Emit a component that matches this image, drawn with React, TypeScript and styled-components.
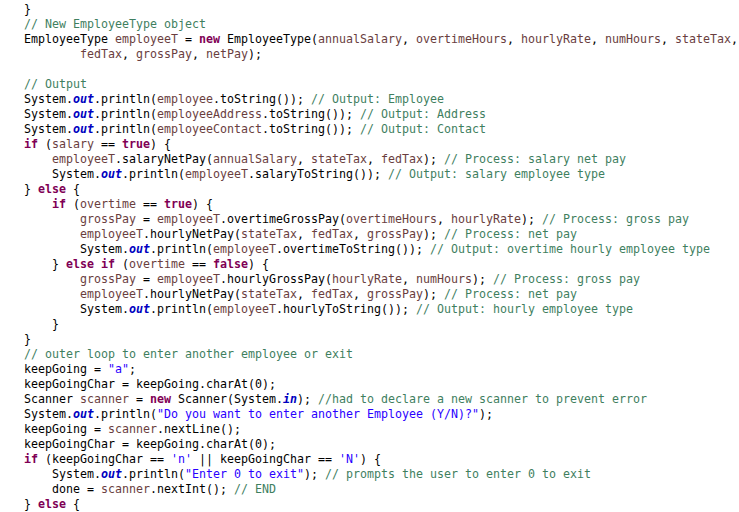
import React from "react";
import styled, { createGlobalStyle } from "styled-components";

const GlobalStyle = createGlobalStyle`
  html, body {
    margin: 0;
    padding: 0;
    background: #ffffff;
  }
`;

type Kind = "plain" | "keyword" | "comment" | "string" | "local" | "field";

const KEYWORDS = new Set(["new", "if", "else", "true", "false"]);
const LOCALS = new Set([
  "employeeT",
  "annualSalary",
  "overtimeHours",
  "hourlyRate",
  "numHours",
  "stateTax",
  "fedTax",
  "grossPay",
  "netPay",
  "employee",
  "employeeAddress",
  "employeeContact",
  "salary",
  "overtime",
  "scanner",
]);
const STATIC_FIELDS = new Set(["out", "in"]);

const SOURCE: string[] = [
  "}",
  "// New EmployeeType object",
  "EmployeeType employeeT = new EmployeeType(annualSalary, overtimeHours, hourlyRate, numHours, stateTax,",
  "        fedTax, grossPay, netPay);",
  "",
  "// Output",
  "System.out.println(employee.toString()); // Output: Employee",
  "System.out.println(employeeAddress.toString()); // Output: Address",
  "System.out.println(employeeContact.toString()); // Output: Contact",
  "if (salary == true) {",
  "    employeeT.salaryNetPay(annualSalary, stateTax, fedTax); // Process: salary net pay",
  "    System.out.println(employeeT.salaryToString()); // Output: salary employee type",
  "} else {",
  "    if (overtime == true) {",
  "        grossPay = employeeT.overtimeGrossPay(overtimeHours, hourlyRate); // Process: gross pay",
  "        employeeT.hourlyNetPay(stateTax, fedTax, grossPay); // Process: net pay",
  "        System.out.println(employeeT.overtimeToString()); // Output: overtime hourly employee type",
  "    } else if (overtime == false) {",
  "        grossPay = employeeT.hourlyGrossPay(hourlyRate, numHours); // Process: gross pay",
  "        employeeT.hourlyNetPay(stateTax, fedTax, grossPay); // Process: net pay",
  "        System.out.println(employeeT.hourlyToString()); // Output: hourly employee type",
  "    }",
  "}",
  "// outer loop to enter another employee or exit",
  'keepGoing = "a";',
  "keepGoingChar = keepGoing.charAt(0);",
  "Scanner scanner = new Scanner(System.in); //had to declare a new scanner to prevent error",
  'System.out.println("Do you want to enter another Employee (Y/N)?");',
  "keepGoing = scanner.nextLine();",
  "keepGoingChar = keepGoing.charAt(0);",
  "if (keepGoingChar == 'n' || keepGoingChar == 'N') {",
  '    System.out.println("Enter 0 to exit"); // prompts the user to enter 0 to exit',
  "    done = scanner.nextInt(); // END",
  "} else {",
];

type Tok = { text: string; kind: Kind };

function tokenize(line: string): Tok[] {
  const out: Tok[] = [];
  let i = 0;
  let prevIdent = "";
  const push = (text: string, kind: Kind) => {
    const last = out[out.length - 1];
    if (last && last.kind === kind) last.text += text;
    else out.push({ text, kind });
  };
  while (i < line.length) {
    const rest = line.slice(i);
    if (rest.startsWith("//")) {
      push(rest, "comment");
      break;
    }
    const ch = line[i];
    if (ch === '"' || ch === "'") {
      const end = line.indexOf(ch, i + 1);
      const s = line.slice(i, end + 1);
      push(s, "string");
      i = end + 1;
      continue;
    }
    const m = /^[A-Za-z_][A-Za-z0-9_]*/.exec(rest);
    if (m) {
      const w = m[0];
      let kind: Kind = "plain";
      if (KEYWORDS.has(w)) kind = "keyword";
      else if (STATIC_FIELDS.has(w) && prevIdent === "System.") kind = "field";
      else if (LOCALS.has(w)) kind = "local";
      push(w, kind);
      prevIdent = w;
      i += w.length;
      if (line[i] === ".") {
        prevIdent = w + ".";
      }
      continue;
    }
    if (ch !== ".") prevIdent = "";
    push(ch, "plain");
    i += 1;
  }
  return out;
}

const Editor = styled.div`
  box-sizing: border-box;
  width: 739px;
  height: 512px;
  overflow: hidden;
  background: #ffffff;
  padding: 2px 0 0 24px;
  font-family: "DejaVu Sans Mono", "Liberation Mono", monospace;
  font-size: 11.63px;
  color: #000000;
`;

const CodeLine = styled.div`
  height: 15px;
  line-height: 15px;
  white-space: pre;
`;

const colors: Record<Kind, string> = {
  plain: "#000000",
  keyword: "#7f0055",
  comment: "#3f7f5f",
  string: "#2a00ff",
  local: "#6a3e3e",
  field: "#0000c0",
};

const Token = styled.span<{ $kind: Kind }>`
  color: ${(p) => colors[p.$kind]};
  font-weight: ${(p) => (p.$kind === "keyword" || p.$kind === "field" ? 700 : 400)};
  font-style: ${(p) => (p.$kind === "field" ? "italic" : "normal")};
`;

export default function App() {
  return (
    <>
      <GlobalStyle />
      <Editor>
        {SOURCE.map((line, li) => (
          <CodeLine key={li}>
            {line === ""
              ? " "
              : tokenize(line).map((t, ti) => (
                  <Token key={ti} $kind={t.kind}>
                    {t.text}
                  </Token>
                ))}
          </CodeLine>
        ))}
      </Editor>
    </>
  );
}
